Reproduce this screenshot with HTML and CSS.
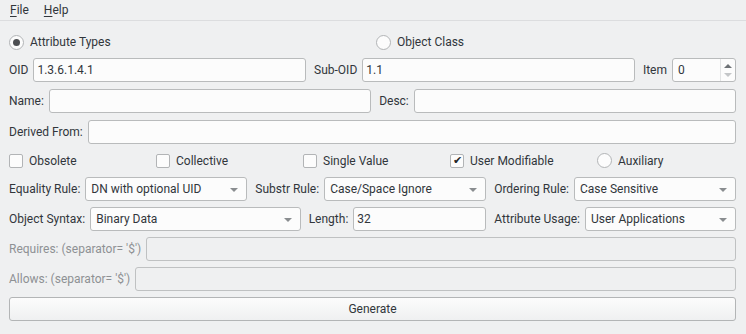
FILE: index.html
```html
<!DOCTYPE html>
<html lang="en">
<head>
    <meta charset="UTF-8">
    <title>LDAP Schema Generator</title>
    <link rel="stylesheet" href="styles.css">
</head>
<body>
    <div class="menubar">
        <span class="menu"><u>F</u>ile</span>
        <span class="menu"><u>H</u>elp</span>
    </div>

    <div class="form">
        <div class="row kind-row">
            <label class="option kind-attr"><span class="radio on"></span>Attribute Types</label>
            <label class="option"><span class="radio"></span>Object Class</label>
        </div>

        <div class="row first">
            <span class="lbl">OID</span>
            <input class="field grow" type="text" value="1.3.6.1.4.1">
            <span class="lbl">Sub-OID</span>
            <input class="field grow" type="text" value="1.1">
            <span class="lbl">Item</span>
            <div class="spin">
                <span class="spin-value">0</span>
                <span class="spin-arrows">
                    <span class="arrow-up"></span>
                    <span class="arrow-down"></span>
                </span>
            </div>
        </div>

        <div class="row">
            <span class="lbl">Name:</span>
            <input class="field grow" type="text">
            <span class="lbl">Desc:</span>
            <input class="field grow" type="text">
        </div>

        <div class="row">
            <span class="lbl">Derived From:</span>
            <input class="field grow" type="text">
        </div>

        <div class="row flags">
            <label class="option"><span class="check"></span>Obsolete</label>
            <label class="option"><span class="check"></span>Collective</label>
            <label class="option"><span class="check"></span>Single Value</label>
            <label class="option"><span class="check on">&#10004;</span>User Modifiable</label>
            <label class="option"><span class="radio"></span>Auxiliary</label>
        </div>

        <div class="row tight">
            <span class="lbl">Equality Rule:</span>
            <div class="combo grow"><span>DN with optional UID</span></div>
            <span class="lbl">Substr Rule:</span>
            <div class="combo grow"><span>Case/Space Ignore</span></div>
            <span class="lbl">Ordering Rule:</span>
            <div class="combo grow"><span>Case Sensitive</span></div>
        </div>

        <div class="row tight">
            <span class="lbl">Object Syntax:</span>
            <div class="combo syntax"><span>Binary Data</span></div>
            <span class="lbl">Length:</span>
            <input class="field length" type="text" value="32">
            <span class="lbl">Attribute Usage:</span>
            <div class="combo usage"><span>User Applications</span></div>
        </div>

        <div class="row tight">
            <span class="lbl off">Requires: (separator= '$')</span>
            <input class="field grow" type="text" disabled>
        </div>

        <div class="row tight">
            <span class="lbl off">Allows: (separator= '$')</span>
            <input class="field grow" type="text" disabled>
        </div>

        <button class="generate">Generate</button>
    </div>
</body>
</html>
```

FILE: styles.css
```css
body {
    margin: 0;
    width: 746px;
    height: 334px;
    background-color: #eff0f1;
    color: #31363b;
    font-family: Roboto, "Noto Sans", sans-serif;
    font-size: 12px;
    overflow: hidden;
}

.menubar {
    display: flex;
    height: 20px;
    align-items: center;
    padding-left: 10px;
    gap: 15px;
    border-bottom: 1px solid #dcdddf;
}

.menu u {
    text-decoration-thickness: 1px;
    text-underline-offset: 2px;
}

.form {
    display: flex;
    flex-direction: column;
    padding: 9px 10px 0 9px;
}

.row {
    display: flex;
    align-items: center;
    height: 24px;
    margin-top: 7px;
}

.row.kind-row {
    margin-top: 0;
}

.row.first {
    margin-top: 4px;
}

.row.tight {
    margin-top: 6px;
}

.kind-attr {
    width: 367px;
}

.lbl {
    white-space: nowrap;
    margin-right: 5px;
    margin-left: 8px;
}

.lbl:first-child {
    margin-left: 0;
}

.lbl.off {
    color: #8e9194;
}

.field {
    box-sizing: border-box;
    height: 24px;
    min-width: 0;
    border: 1px solid #b9bbbc;
    border-radius: 3px;
    background-color: #fcfcfc;
    padding: 0 3px;
    font: inherit;
    color: #31363b;
    outline: none;
}

.field:disabled {
    background-color: #eff0f1;
    border-color: #bfc1c2;
}

.grow {
    flex: 1 1 0;
}

.length {
    width: 133px;
    flex: none;
}

.syntax {
    flex: 212 1 0;
}

.usage {
    width: 151px;
    flex: none;
}

.spin {
    box-sizing: border-box;
    display: flex;
    align-items: center;
    width: 64px;
    height: 24px;
    border: 1px solid #b9bbbc;
    border-radius: 3px;
    background-color: #fcfcfc;
    padding-left: 5px;
}

.spin-value {
    flex: 1;
}

.spin-arrows {
    display: flex;
    flex-direction: column;
    align-items: center;
    gap: 5px;
    width: 14px;
    height: 100%;
    justify-content: center;
    border-left: 1px solid #e3e4e5;
}

.arrow-up {
    border-left: 4px solid transparent;
    border-right: 4px solid transparent;
    border-bottom: 4px solid #6e7276;
}

.arrow-down {
    border-left: 4px solid transparent;
    border-right: 4px solid transparent;
    border-top: 4px solid #c4c6c8;
}

.combo {
    position: relative;
    box-sizing: border-box;
    display: flex;
    align-items: center;
    height: 24px;
    min-width: 0;
    border: 1px solid #b9bbbc;
    border-radius: 3px;
    background-color: #fcfcfc;
    padding-left: 5px;
    white-space: nowrap;
}

.combo::after {
    content: "";
    position: absolute;
    right: 8px;
    top: 10px;
    border-left: 4px solid transparent;
    border-right: 4px solid transparent;
    border-top: 4px solid #8a8d90;
}

.flags {
    display: grid;
    grid-template-columns: repeat(4, 147px) 1fr;
    height: 21px;
    margin-top: 6px;
}

.option {
    display: flex;
    align-items: center;
    white-space: nowrap;
}

.check {
    box-sizing: border-box;
    display: flex;
    align-items: center;
    justify-content: center;
    width: 14px;
    height: 14px;
    margin-right: 6px;
    border: 1px solid #b2b4b6;
    border-radius: 2px;
    background-color: #fcfcfc;
    font-size: 11px;
    line-height: 1;
    color: #232627;
}

.radio {
    box-sizing: border-box;
    display: flex;
    align-items: center;
    justify-content: center;
    width: 15px;
    height: 15px;
    margin-right: 6px;
    border: 1px solid #b2b4b6;
    border-radius: 50%;
    background-color: #fcfcfc;
}

.radio.on::after {
    content: "";
    width: 7px;
    height: 7px;
    border-radius: 50%;
    background-color: #4d4f52;
}

.generate {
    box-sizing: border-box;
    height: 24px;
    margin-top: 6px;
    border: 1px solid #b3b5b6;
    border-radius: 3px;
    background: linear-gradient(#fcfcfc, #eff0f1);
    font: inherit;
    color: #31363b;
}
```
